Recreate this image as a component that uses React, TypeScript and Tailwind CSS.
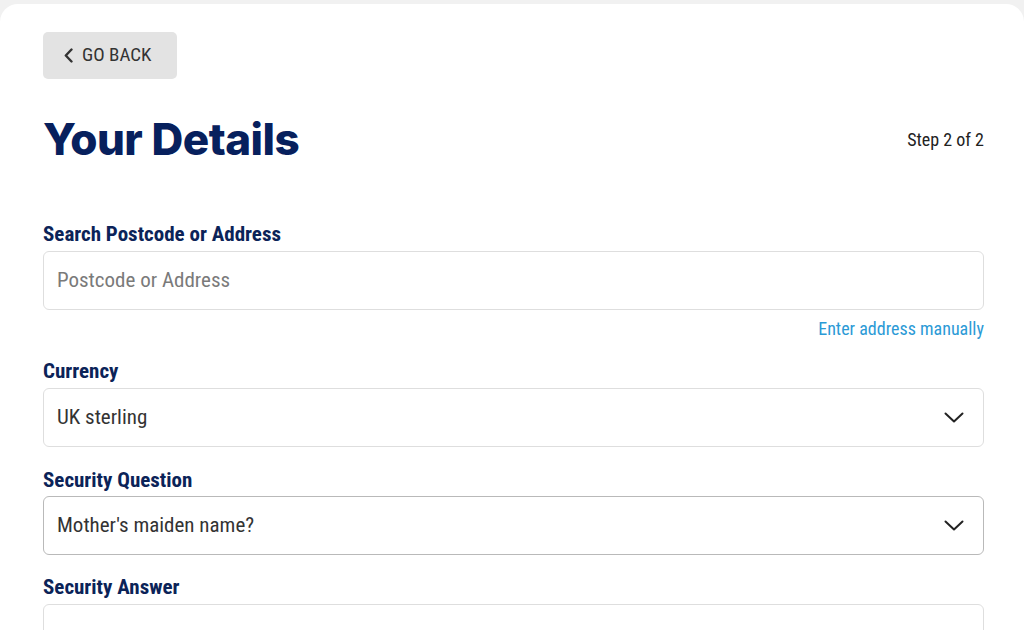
const body = {
  fontFamily: '"Roboto Condensed", "Liberation Sans Narrow", Roboto, sans-serif',
};

function Label({ children }: { children: React.ReactNode }) {
  return (
    <label className="block text-[21px] font-bold leading-[24px] text-[#0b2358]">
      {children}
    </label>
  );
}

function Chevron() {
  return (
    <svg width="20" height="11" viewBox="0 0 20 11" fill="none">
      <polyline
        points="1.5,1.5 10,9.5 18.5,1.5"
        stroke="#222"
        strokeWidth="2"
        strokeLinecap="round"
        strokeLinejoin="round"
      />
    </svg>
  );
}

function SelectBox({ value, dark }: { value: string; dark?: boolean }) {
  return (
    <div
      className={`flex h-[59px] items-center justify-between rounded-[6px] border bg-white pl-[13px] pr-[19px] ${
        dark ? "border-[#b9b9b9]" : "border-[#dedede]"
      }`}
    >
      <span className="text-[21px] text-[#333]">{value}</span>
      <Chevron />
    </div>
  );
}

export default function App() {
  return (
    <div className="h-[630px] overflow-hidden bg-[#f1f1f1] pt-[4px]" style={body}>
      <div className="h-[626px] rounded-t-[18px] bg-white pl-[43px] pr-[40px] pt-[28px]">
        <button className="flex h-[47px] w-[134px] items-center gap-[9px] rounded-[5px] bg-[#e3e3e3] pl-[21px] text-[19px] text-[#333]">
          <svg width="9" height="15" viewBox="0 0 9 15" fill="none">
            <polyline
              points="7.5,1.5 1.8,7.5 7.5,13.5"
              stroke="#333"
              strokeWidth="2.4"
              strokeLinecap="round"
              strokeLinejoin="round"
            />
          </svg>
          <span>GO BACK</span>
        </button>

        <div className="mt-[34px] flex items-center justify-between">
          <h1
            className="text-[44px] font-extrabold leading-[52px] tracking-[-0.5px] text-[#07205d]"
            style={{ fontFamily: "Inter, sans-serif" }}
          >
            Your Details
          </h1>
          <span className="text-[18px] text-[#222]">Step 2 of 2</span>
        </div>

        <div className="mt-[57px]">
          <Label>Search Postcode or Address</Label>
          <div className="mt-[5px] flex h-[59px] items-center rounded-[6px] border border-[#dedede] pl-[13px]">
            <input
              placeholder="Postcode or Address"
              className="w-full bg-transparent text-[21px] text-[#333] outline-none placeholder:text-[#7a7a7a]"
            />
          </div>
          <div className="mt-[8px] text-right text-[18px] leading-[22px] text-[#2b9ad6]">
            Enter address manually
          </div>
        </div>

        <div className="mt-[19px]">
          <Label>Currency</Label>
          <div className="mt-[5px]">
            <SelectBox value="UK sterling" />
          </div>
        </div>

        <div className="mt-[21px]">
          <Label>Security Question</Label>
          <div className="mt-[4px]">
            <SelectBox value="Mother's maiden name?" dark />
          </div>
        </div>

        <div className="mt-[20px]">
          <Label>Security Answer</Label>
          <div className="mt-[5px] h-[59px] rounded-[6px] border border-[#dedede]" />
        </div>
      </div>
    </div>
  );
}
